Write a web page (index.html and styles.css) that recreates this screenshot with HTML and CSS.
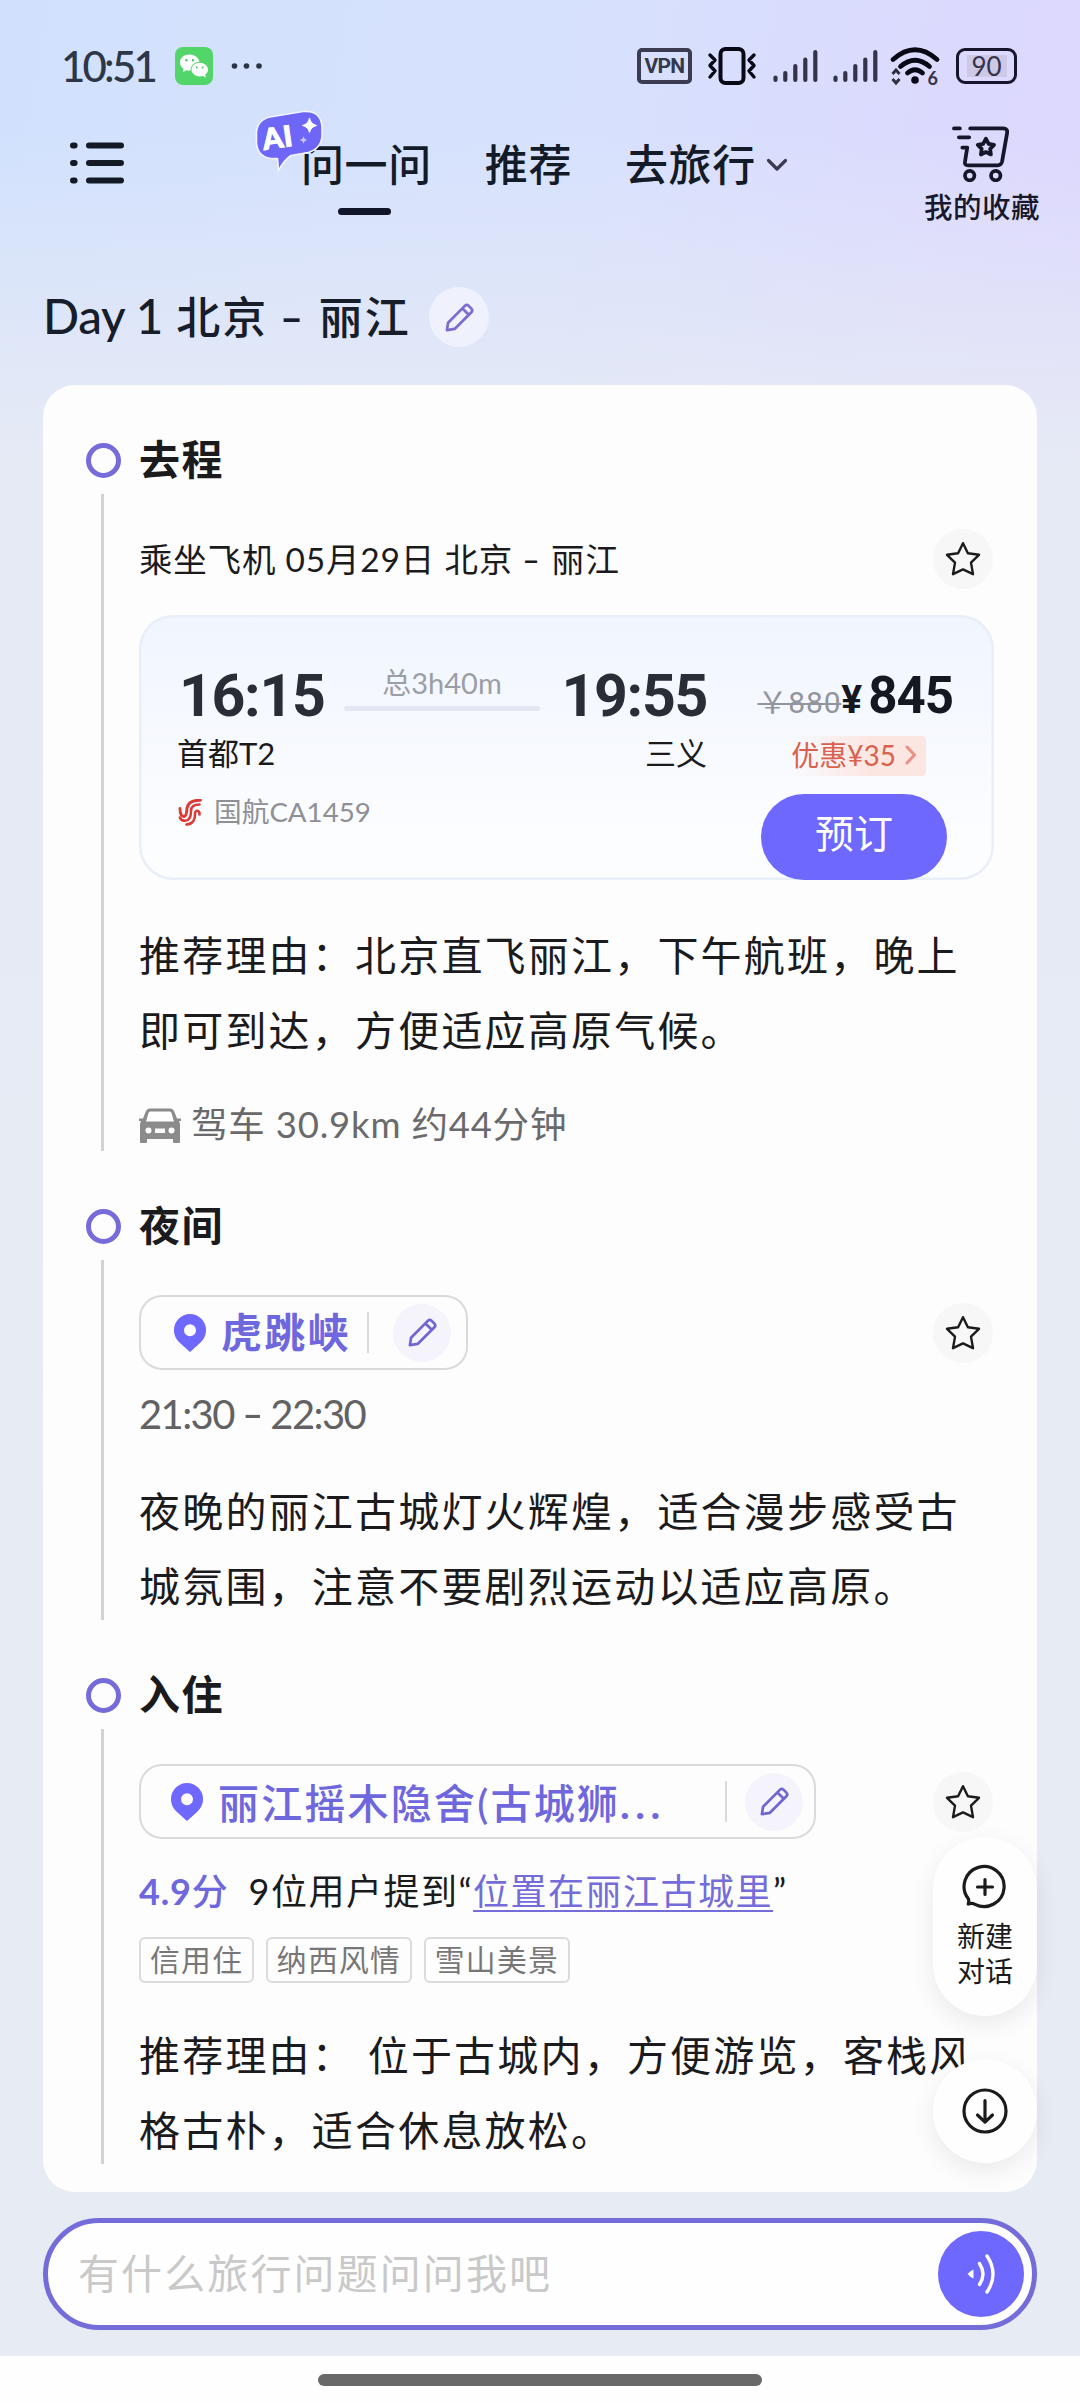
FILE: index.html
```html
<!DOCTYPE html>
<html lang="zh-CN">
<head>
<meta charset="utf-8">
<title>Day 1 北京 - 丽江</title>
<link rel="stylesheet" href="styles.css">
</head>
<body>
<svg class="defs" aria-hidden="true">
  <symbol id="pencil" viewBox="0 0 32 32">
    <path d="M3 29 L4.2 21.5 L21.5 4 Q23.5 2 25.5 4 L28.3 6.8 Q30 8.8 28.3 10.6 L11 27.8 Z M19 6.8 L25.6 13.2" fill="none" stroke="currentColor" stroke-width="2.8" stroke-linejoin="round"/>
  </symbol>
  <symbol id="star" viewBox="0 0 36 36">
    <path d="M18 2.2 L22.9 12.2 L34 13.8 L26 21.6 L28 33.2 L18 28.4 L8 33.2 L10 21.6 L2 13.8 L13.1 12.2 Z" fill="none" stroke="currentColor" stroke-width="2.4" stroke-linejoin="round"/>
  </symbol>
  <symbol id="pin" viewBox="0 0 32 38">
    <path fill-rule="evenodd" d="M16 0 A16 16 0 0 0 0 16 C0 22 2.6 25.6 6 29 L16 38 L26 29 C29.4 25.6 32 22 32 16 A16 16 0 0 0 16 0 Z M16 10.2 A6 6 0 1 1 16 22.2 A6 6 0 1 1 16 10.2 Z" fill="currentColor"/>
  </symbol>
  <symbol id="signal" viewBox="0 0 45 34">
    <path d="M2.5 28.5 V31 M12.3 24 V31 M22.3 17 V31 M32.3 10.5 V31 M42.3 3 V31" stroke="currentColor" stroke-width="4.2" stroke-linecap="round"/>
  </symbol>
</svg>

<header class="status">
  <span class="clock">10:51</span>
  <svg class="wechat" viewBox="0 0 38 38">
    <rect width="38" height="38" rx="8" fill="#52d669"/>
    <path d="M14.5 7.5 C9 7.5 5 11 5 15.5 C5 18.2 6.3 20.3 8.5 21.8 L7.8 25.2 L11.5 23.2 C12.5 23.5 14 23.7 15.5 23.6 C15.4 18.5 19.5 15 24.5 14.8 C23.6 10.4 19.3 7.5 14.5 7.5 Z" fill="#fff"/>
    <path d="M24.7 15.7 C20 15.7 16.5 18.8 16.5 22.6 C16.5 26.4 20 29.4 24.7 29.4 C25.8 29.4 26.9 29.2 27.8 28.9 L30.8 30.5 L30.2 27.7 C32 26.5 33 24.7 33 22.6 C33 18.8 29.4 15.7 24.7 15.7 Z" fill="#fff"/>
    <g fill="#52c866"><circle cx="11.4" cy="13.3" r="1.2"/><circle cx="18" cy="13.3" r="1.2"/><circle cx="21.8" cy="20.4" r="1"/><circle cx="27.6" cy="20.4" r="1"/></g>
  </svg>
  <svg class="dots" viewBox="0 0 32 8"><circle cx="3.5" cy="4" r="2.8"/><circle cx="15.5" cy="4" r="2.8"/><circle cx="28" cy="4" r="2.8"/></svg>
  <div class="indicators">
    <span class="vpn">VPN</span>
    <svg class="vibrate" viewBox="0 0 50 40"><g fill="none" stroke="#080914" stroke-width="4" stroke-linejoin="round" stroke-linecap="round"><rect x="13.5" y="3" width="23" height="34" rx="5"/><path d="M3 9 L8 14 L3 19.5 L8 25 L3 31 M47 9 L42 14 L47 19.5 L42 25 L47 31" stroke-width="3.4"/></g></svg>
    <svg class="signal"><use href="#signal"/></svg>
    <svg class="signal"><use href="#signal"/></svg>
    <svg class="wifi" viewBox="0 0 50 46">
      <g fill="none" stroke="#080914" stroke-width="4.8" stroke-linecap="round"><path d="M3 13.5 Q25 -6 47 13.5"/><path d="M10.5 20.5 Q25 8 39.5 20.5"/><path d="M17.5 27 Q25 20.5 32.5 27"/></g>
      <circle cx="25" cy="34" r="3.8" fill="#080914"/>
      <path d="M2.5 28 L6 24 L9.5 28 M2.5 33 L6 37 L9.5 33" fill="none" stroke="#2d2c3f" stroke-width="2.8"/>
      <text x="37.5" y="38.5" class="wifi-gen">6</text>
    </svg>
    <span class="battery"><span>90</span></span>
  </div>
</header>

<nav class="topnav">
  <svg class="menu" viewBox="0 0 54 42"><g stroke="#131a26" stroke-width="6" stroke-linecap="round"><path d="M3 3.5 H4.6 M19 3.5 H51 M3 21 H4.6 M19 21 H51 M3 38.5 H4.6 M19 38.5 H51"/></g></svg>
  <div class="tabs">
    <div class="tab active">问一问
      <svg class="ai" viewBox="0 0 68 62">
        <path d="M15 7 L48 1.5 Q66 0 67 17 L67 26 Q66 39 53 42.5 L36 45.5 Q29 50 23.5 60.5 Q23 54 22.5 48.5 Q3 50 1.5 33 L1.5 23 Q2 10 15 7 Z" fill="#6d66f7" stroke="#f2f3ff" stroke-width="1.6"/>
        <text x="9" y="40" class="ai-text" transform="rotate(-8 9 40)">AI</text>
        <path d="M54.5 8 Q55.800 14.200 61.500 15.500 Q55.800 16.800 54.500 22.500 Q53.200 16.800 47.500 15.500 Q53.200 14.200 54.500 8 Z" fill="#fff" stroke="#fff" stroke-width="1"/>
        <path d="M48.500 26 Q49 29.500 52.500 30 Q49 30.500 48.500 34 Q48 30.500 44.500 30 Q48 29.500 48.500 26 Z" fill="#c9c6ff"/>
      </svg>
    </div>
    <div class="tab">推荐</div>
    <div class="tab">去旅行<svg class="caret" viewBox="0 0 22 14"><path d="M2.500 2.500 L11 11 L19.500 2.500" fill="none" stroke="#3c3a52" stroke-width="3.200" stroke-linecap="round" stroke-linejoin="round"/></svg></div>
  </div>
  <div class="favs">
    <svg viewBox="0 0 58 58"><g fill="none" stroke="#14162a" stroke-width="3.800" stroke-linecap="round" stroke-linejoin="round"><path d="M2 3.500 H8 M18.500 3.500 H52 Q57 3.500 56 8.500 L51 37 Q50 41 46.500 41 H16.500 Q12.500 41 13.200 37.500 L15.500 23 H10.500 M7 12.500 H17.500"/><circle cx="18" cy="51.500" r="4.800"/><circle cx="44.500" cy="51.500" r="4.800"/><path d="M34.500 14 L37.300 19.200 L42.800 20.200 L38.800 24.300 L39.600 30 L34.500 27.500 L29.400 30 L30.200 24.300 L26.200 20.200 L31.700 19.200 Z"/></g></svg>
    <span>我的收藏</span>
  </div>
</nav>

<div class="day">
  <h1><span class="latin">Day 1</span> 北京 <span class="dash">-</span> 丽江</h1>
  <button class="edit light"><svg><use href="#pencil"/></svg></button>
</div>

<main class="plan">
  <section class="stop">
    <i class="node"></i><h2>去程</h2>
    <i class="rail full"></i>
    <div class="body">
      <div class="line-row"><span class="transport">乘坐飞机 05月29日 北京 <span class="dash">-</span> 丽江</span><button class="fav"><svg><use href="#star"/></svg></button></div>
      <div class="flight">
        <div class="route">
          <b class="time">16:15</b>
          <div class="duration"><span>总3h40m</span><i></i></div>
          <b class="time end">19:55</b>
          <span class="port">首都T2</span>
          <span class="port arrive">三义</span>
          <div class="airline">
            <svg viewBox="0 0 24 27"><g fill="none" stroke="#dd3a36" stroke-linecap="round"><path d="M22.500 1.300 C15 1 10 3 9 9 C8.500 13 9 17 6 17.500 C3 17.500 2 14 2 9.500" stroke-width="2.900"/><path d="M21.500 5.500 C16 5.500 13 7.500 13 12 C13 18 11 21.800 7 21.800 C4.500 21.800 2.500 20.500 1.800 18.500" stroke-width="2.500"/><path d="M21.500 15.500 C22 10.800 16.800 10.500 17 15 C17.300 20 15 25 8.500 25.500" stroke-width="2.600"/></g></svg>
            <span>国航CA1459</span>
          </div>
        </div>
        <div class="fare">
          <div class="price"><s>￥880</s><b><small>¥</small>845</b></div>
          <div class="coupon">优惠¥35<svg viewBox="0 0 12 20"><path d="M2 2 L9.500 10 L2 18" fill="none" stroke="#ec8f86" stroke-width="3" stroke-linecap="round" stroke-linejoin="round"/></svg></div>
          <button class="book">预订</button>
        </div>
      </div>
      <p class="text reason">推荐理由：北京直飞丽江，下午航班，晚上<br>即可到达，方便适应高原气候。</p>
      <div class="drive">
        <svg viewBox="0 0 42 35"><path d="M10.500 0.500 H31.500 Q34 0.500 35 3 L38 10.500 H42 V13 H40 Q41 15 41 17 V34 Q41 35 40 35 H35 Q34 35 34 34 V31 H8 V34 Q8 35 7 35 H2 Q1 35 1 34 V17 Q1 15 2 13 H0 V10.500 H4 L7 3 Q8 0.500 10.500 0.500 Z" fill="#8b8b8b"/><path d="M11 3.500 H31 Q32 3.500 32.500 5 L35 13.500 H7 L9.500 5 Q10 3.500 11 3.500 Z" fill="#fff"/><rect x="16" y="20.500" width="10" height="4.500" fill="#fff"/><circle cx="9.500" cy="22.500" r="3" fill="#fff"/><circle cx="32.500" cy="22.500" r="3" fill="#fff"/></svg>
        <span>驾车 30.9km 约44分钟</span>
      </div>
    </div>
  </section>

  <section class="stop night">
    <i class="node"></i><h2>夜间</h2>
    <i class="rail"></i>
    <div class="body">
      <div class="place-row">
        <div class="place"><svg class="pin"><use href="#pin"/></svg><b>虎跳峡</b><i></i><button class="edit"><svg><use href="#pencil"/></svg></button></div>
        <button class="fav"><svg><use href="#star"/></svg></button>
      </div>
      <div class="hours">21:30 <span class="dash">-</span> 22:30</div>
      <p class="text">夜晚的丽江古城灯火辉煌，适合漫步感受古<br>城氛围，注意不要剧烈运动以适应高原。</p>
    </div>
  </section>

  <section class="stop stay">
    <i class="node"></i><h2>入住</h2>
    <i class="rail"></i>
    <div class="body">
      <div class="place-row">
        <div class="place wide"><svg class="pin"><use href="#pin"/></svg><b>丽江摇木隐舍(古城狮<span class="more">...</span></b><i></i><button class="edit"><svg><use href="#pencil"/></svg></button></div>
        <button class="fav"><svg><use href="#star"/></svg></button>
      </div>
      <div class="rating"><b>4.9<span>分</span></b><span>9位用户提到“<a>位置在丽江古城里</a>”</span></div>
      <div class="tags"><span>信用住</span><span>纳西风情</span><span>雪山美景</span></div>
      <p class="text">推荐理由： 位于古城内，方便游览，客栈风<br>格古朴，适合休息放松。</p>
    </div>
  </section>

  <aside class="floaters">
    <button class="new-chat">
      <svg viewBox="0 0 46 46"><g fill="none" stroke="#1b1b1d" stroke-width="3.200" stroke-linecap="round" stroke-linejoin="round"><path d="M6.500 35 A20 20 0 1 1 13 40.300 Q10 38.800 6.200 40 Q7.200 37.500 6.500 35 Z"/><path d="M23 15.500 V30.500 M15.500 23 H30.500"/></g></svg>
      <span>新建<br>对话</span>
    </button>
    <button class="down">
      <svg viewBox="0 0 46 46"><g fill="none" stroke="#1b1b1d" stroke-width="3.200" stroke-linecap="round" stroke-linejoin="round"><circle cx="23" cy="23" r="21"/><path d="M23 12.500 V34 M15.500 27 L23 34.200 L30.500 27"/></g></svg>
    </button>
  </aside>
</main>

<div class="ask">
  <span>有什么旅行问题问问我吧</span>
  <button><svg viewBox="0 0 30 42"><path d="M7.500 16.500 V25.500 Q4 24 1.500 21 Q4 18 7.500 16.500 Z" fill="#fff"/><g fill="none" stroke="#fff" stroke-width="3.400" stroke-linecap="round"><path d="M13.500 10.500 Q20.500 21 13.500 31.500"/><path d="M21 3 Q33 21 21 39"/></g></svg></button>
</div>
<footer class="gesture"><i></i></footer>
</body>
</html>
```
FILE: styles.css
```css
* { box-sizing: border-box; }
body {
  margin: 0;
  width: 1080px;
  height: 2403px;
  display: flex;
  flex-direction: column;
  font-family: Lato, "Noto Sans CJK SC", sans-serif;
  color: #1b1b1d;
  background:
    linear-gradient(to bottom, rgba(230,234,245,0) 130px, #e6eaf5 460px, #e7ebf3 1500px),
    linear-gradient(100deg, #d1e1fd 0, #d7e1fd 40%, #dcd8fe 70%, #dbd4fe 100%);
  overflow: hidden;
}
h1, h2, p { margin: 0; }
i { font-style: normal; display: block; }
svg { display: block; flex: none; }
button { border: 0; padding: 0; margin: 0; font: inherit; color: inherit; background: none; display: flex; align-items: center; justify-content: center; flex: none; }
.defs { position: absolute; width: 0; height: 0; }
.dash { display: inline-block; transform: scaleX(1.45); margin: 0 3px; }

/* status bar */
.status { height: 68px; margin-top: 32px; padding: 0 63px 0 61px; display: flex; align-items: center; flex: none; }
.clock { width: 114px; font-size: 42px; line-height: 68px; letter-spacing: -2.800px; color: #2d3748; font-weight: 500; }
.wechat { width: 38px; height: 38px; }
.dots { width: 32px; height: 8px; margin-left: 18px; fill: #2b3346; }
.indicators { margin-left: auto; display: flex; align-items: center; color: #35334a; }
.vpn { width: 55px; height: 36px; border: 4px solid #3b3c52; border-radius: 5px; font: 700 21px/28px Roboto, sans-serif; letter-spacing: -.700px; text-align: center; color: #35374c; }
.vibrate { width: 50px; height: 40px; margin-left: 15px; }
.signal { width: 45px; height: 34px; margin-left: 15px; }
.vibrate + .signal { margin-left: 16px; }
.wifi { width: 50px; height: 46px; margin: 6px 0 0 12px; overflow: visible; }
.wifi-gen { font: 700 18px Lato, sans-serif; fill: #35334a; }
.battery { width: 61px; height: 36px; margin-left: 16px; border: 3px solid #16152b; border-radius: 9px; display: flex; align-items: center; justify-content: center; }
.battery span { width: 40px; background: linear-gradient(#cdc8e6, #cdc8e6) center / 40px 22px no-repeat; font-size: 26px; line-height: 36px; text-align: center; color: #35334a; }

/* top navigation */
.topnav { height: 160px; display: flex; align-items: flex-start; flex: none; padding-left: 70px; }
.menu { width: 54px; height: 42px; margin-top: 42px; }
.tabs { display: flex; margin-left: 177px; gap: 53px; padding-top: 34px; }
.tab { position: relative; display: flex; align-items: center; height: 61px; line-height: 61px; font-size: 43px; font-weight: 500; letter-spacing: .600px; color: #131a28; white-space: nowrap; }
.active::after { content: ""; position: absolute; left: 37px; top: 74px; width: 53px; height: 7px; border-radius: 4px; background: #12162a; }
.ai { position: absolute; left: -46px; top: -24px; width: 68px; height: 62px; overflow: visible; }
.ai-text { font: 900 29px Lato, sans-serif; fill: #fff; stroke: #fff; stroke-width: 1px; }
.caret { width: 22px; height: 14px; margin-left: 10px; }
.favs { margin: 25px 0 0 auto; box-sizing: content-box; padding-right: 40px; width: 116px; display: flex; flex-direction: column; align-items: center; }
.favs svg { width: 57px; height: 57px; margin-right: 3px; }
.favs span { margin-top: 7px; font-size: 28.500px; line-height: 36px; letter-spacing: .500px; font-weight: 500; color: #17182c; white-space: nowrap; }

.day { display: flex; align-items: center; height: 60px; margin: 27px 0 38px 43px; gap: 21px; flex: none; }
h1 { font-size: 44px; line-height: 58px; padding-bottom: 2px; font-weight: 500; letter-spacing: 2px; color: #171d2b; white-space: nowrap; width: 365px; }
h1 .latin { font-size: 47.500px; letter-spacing: -.300px; }
.edit { width: 58px; height: 58px; border-radius: 50%; background: #f5f4fd; color: #6f66d2; }
.edit svg { width: 31px; height: 31px; }
.light { width: 60px; height: 60px; background: #eff1fd; color: #7d6bcf; }

/* itinerary card */
.plan { position: relative; height: 1807px; flex: none; margin: 0 43px; padding: 45px 43px 0; border-radius: 32px; background: #fdfdfd; }
.stop { display: grid; grid-template-columns: 35px 1fr; grid-template-rows: 60px auto; column-gap: 18px; align-items: center; }
.night { margin-top: 45px; }
.stay { margin-top: 41px; }
.node { width: 35px; height: 35px; border: 5px solid #756cd9; border-radius: 50%; }
h2 { font-size: 41px; line-height: 60px; font-weight: 700; letter-spacing: 1.500px; }
.rail { width: 3px; margin: 4px 0 4px 15px; background: #d3d3d5; align-self: stretch; }
.rail.full { margin-bottom: 0; }
.line-row { display: flex; align-items: center; justify-content: space-between; height: 60px; margin-top: 39px; }
.transport { font-size: 33.500px; letter-spacing: .800px; padding-bottom: 3px; white-space: nowrap; }
.fav { width: 60px; height: 60px; margin-right: 1px; border-radius: 50%; background: #f7f7f7; }
.fav svg { width: 36px; height: 36px; }

.flight { display: flex; margin-top: 26px; height: 265px; border-radius: 34px; padding-left: 38px; background: linear-gradient(#f0f6fe, #f8faff 55%, #fcfdff 85%); box-shadow: inset 0 0 0 2.500px #e8eff8; }
.route { width: 530px; padding-top: 50px; display: grid; grid-template-columns: auto 1fr auto; grid-template-rows: 61px 54px 62px; align-items: center; }
.time { font: 700 59px/60px Roboto, sans-serif; color: #292d36; padding-left: 2px; letter-spacing: -1.300px; }
.duration { margin: 0 19px; height: 61px; text-align: center; color: #9b9ea6; font-size: 29px; line-height: 35px; display: flex; flex-direction: column; gap: 6px; }
.duration i { height: 5px; background: #e2e7f1; border-radius: 3px; }
.port { font-size: 31px; line-height: 54px; white-space: nowrap; }
.arrive { grid-column: 2 / 4; justify-self: end; }
.airline { grid-column: 1 / 4; display: flex; align-items: center; gap: 12px; padding: 2px 0 0 1px; font-size: 27.700px; line-height: 60px; color: #8e9096; }
.airline svg { width: 24px; height: 27px; }
.fare { margin-left: 46px; width: 200px; display: flex; flex-direction: column; }
.price { height: 121px; padding-top: 51px; display: flex; justify-content: flex-end; align-items: baseline; line-height: 60px; white-space: nowrap; font-family: Roboto, "Noto Sans CJK SC", sans-serif; }
.price s { color: #92959e; font-size: 30px; text-decoration-thickness: 2px; letter-spacing: .800px; }
.price b { font-size: 51px; color: #16181f; letter-spacing: -1px; }
.price small { font-size: 39px; margin-right: 7px; }
.coupon { align-self: flex-end; margin-right: 27px; height: 40px; line-height: 38px; display: flex; align-items: center; padding: 0 9px 2px 0; gap: 9px; border-radius: 4px; font-size: 28px; color: #d9614d; background: linear-gradient(to right, rgba(253,229,224,0), #fce6e1 60%); white-space: nowrap; }
.coupon svg { width: 12px; height: 20px; }
.book { margin: 18px 0 0 8px; width: 186px; height: 86px; border-radius: 43px; background: #6e68fe; color: #fff; font-size: 39px; line-height: 78px; padding-bottom: 8px; }

.text { font-size: 41px; line-height: 75px; letter-spacing: 2.200px; white-space: nowrap; margin-top: 35px; }
.reason { margin-top: 38px; }
.drive { display: flex; align-items: center; gap: 10px; height: 52px; margin-top: 31px; font-size: 36.500px; line-height: 50px; letter-spacing: .800px; color: #6a6a6c; white-space: nowrap; }
.drive svg { width: 42px; height: 35px; }
.drive span { padding-bottom: 2px; }

.place-row { display: flex; justify-content: space-between; align-items: center; margin-top: 39px; height: 75px; }
.place { display: flex; align-items: center; width: 329px; height: 75px; border: 2px solid #dadadc; border-radius: 23px; padding: 0 15px 0 33px; color: #6e67dd; }
.place b { margin-left: 15px; font-size: 41px; line-height: 71px; font-weight: 600; letter-spacing: 2.200px; white-space: nowrap; }
.place > i { width: 2px; height: 41px; margin-left: auto; margin-right: 24px; background: #dadadc; }
.pin { width: 32px; height: 38px; color: #6e68fe; }
.wide { width: 677px; padding: 0 11px 0 30px; }
.wide b { padding-top: 3px; font-weight: 500; }
.wide > i { margin-right: 18px; }
.more { letter-spacing: 5.500px; font-weight: 700; }
.hours { height: 50px; margin-top: 19px; font-size: 40px; line-height: 50px; letter-spacing: -1.600px; color: #626264; white-space: nowrap; }
.rating { display: flex; height: 50px; margin-top: 27px; font-size: 36px; line-height: 50px; letter-spacing: 1.500px; gap: 20px; white-space: nowrap; }
.rating b { color: #6e67dd; font-weight: 700; letter-spacing: .800px; }
.rating b span { font-weight: 500; }
.rating a { color: #746cd9; text-decoration: underline; text-decoration-thickness: 2px; text-underline-offset: 5px; }
.tags { display: flex; gap: 11.500px; margin-top: 21px; }
.tags span { height: 46px; padding: 0 9px; border: 2px solid #dcdadb; border-radius: 6px; font-size: 29.800px; line-height: 41px; letter-spacing: 1.300px; color: #777; white-space: nowrap; }

/* floating actions over the card */
.floaters { position: absolute; right: 0; top: 1452px; width: 104px; display: flex; flex-direction: column; gap: 43px; }
.floaters button { width: 104px; border-radius: 52px; background: #fefefe; box-shadow: 0 8px 24px rgba(0,0,0,.08); }
.new-chat { height: 179px; flex-direction: column; }
.new-chat svg, .down svg { width: 46px; height: 46px; }
.new-chat span { margin-top: 9px; font-size: 28px; line-height: 35px; }
.down { height: 104px; }

.ask { flex: none; height: 112px; margin: 26px 43px; padding: 0 8px 0 30px; border: 5px solid #746cd9; border-radius: 56px; background: #fefefe; display: flex; align-items: center; justify-content: space-between; font-size: 41px; line-height: 60px; letter-spacing: 2.100px; color: #c9c9ca; }
.ask button { width: 86px; height: 86px; border-radius: 50%; background: #6e68fe; }
.ask svg { width: 30px; height: 42px; }
.gesture { flex: none; height: 47px; padding-top: 18px; background: #fefefe; }
.gesture i { width: 444px; height: 12px; margin: 0 auto; border-radius: 6px; background: #696969; }
```
